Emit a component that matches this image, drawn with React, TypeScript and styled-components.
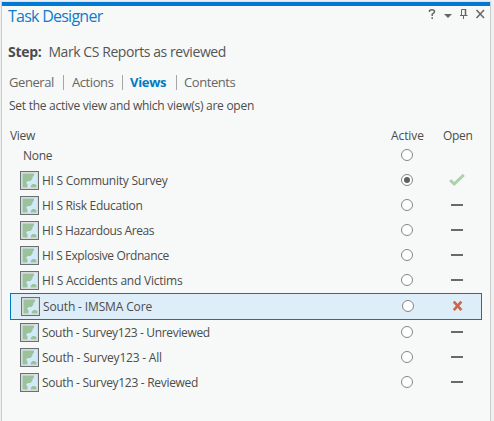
import React from 'react';
import styled, { createGlobalStyle } from 'styled-components';

const GlobalStyle = createGlobalStyle`
  * { box-sizing: border-box; }
  body {
    margin: 0;
    background: #f0f0f0;
    overflow: hidden;
    font-family: "Open Sans", "Noto Sans", sans-serif;
    font-size: 12px;
    color: #4c4c4c;
  }
`;

const Frame = styled.div`
  height: 421px;
  padding: 1px 3px 0 1px;
  background: #f0f0f0;
`;

const Panel = styled.section`
  height: 420px;
  border: 1px solid #cccccc;
  border-bottom: 0;
  border-top-color: #d9e3ea;
  background: #f7f9f8;
`;

const AccentBar = styled.div`
  height: 4px;
  background: #0078d4;
`;

const TitleBar = styled.header`
  height: 30px;
  display: flex;
  justify-content: space-between;
  padding: 0 5px 0 6px;
`;

const Text = styled.span<{ $ls?: number }>`
  white-space: pre;
  letter-spacing: ${(p) => p.$ls ?? 0}px;
`;

const Title = styled.h1`
  margin: 0;
  font-size: 16px;
  line-height: 21px;
  font-weight: 400;
  color: #0f7bcb;
`;

const WindowTools = styled.div`
  display: flex;
  height: 16px;
`;

const StepLine = styled.div`
  height: 32px;
  padding-left: 6px;
  font-size: 14px;
  line-height: 31px;
  display: flex;
  gap: 7px;
`;

const StepName = styled(Text)`
  color: #555;
`;

const StepLabel = styled(Text)`
  font-weight: 700;
`;

const Tabs = styled.nav`
  display: flex;
  align-items: center;
  height: 30px;
  padding: 0 0 1px 7px;
`;

const Tab = styled.div<{ $width: number; $active?: boolean }>`
  width: ${(p) => p.$width}px;
  margin-top: -2px;
  font-size: 13px;
  line-height: 18px;
  font-weight: ${(p) => (p.$active ? 700 : 400)};
  color: ${(p) => (p.$active ? '#007ac2' : '#666')};
`;

const Divider = styled.div<{ $gap: number }>`
  width: 1px;
  height: 15px;
  margin-right: ${(p) => p.$gap}px;
  background: #a6a6a6;
`;

const Hint = styled.div`
  height: 30px;
  padding-left: 7px;
  line-height: 15px;
`;

const ListHeader = styled.div`
  display: grid;
  grid-template-columns: 381px 52px 40px;
  margin-left: 8px;
  height: 15px;
  line-height: 15px;
`;

const Row = styled.div<{ $selected?: boolean }>`
  display: grid;
  grid-template-columns: 391px 46px 18px;
  width: 472px;
  height: ${(p) => (p.$selected ? 27 : 25)}px;
  margin-left: 8px;
  ${(p) =>
    p.$selected
      ? 'border: 1px solid #0079c1; background: #deeef8;'
      : ''}
`;

const NameCell = styled.div<{ $indent: number }>`
  display: flex;
  align-items: center;
  height: 25px;
  gap: 3px;
  padding-left: ${(p) => p.$indent}px;
  line-height: 25px;
`;

const Radio = styled.span`
  width: 12px;
  height: 12px;
  margin-top: 6px;
  border: 1px solid #858585;
  border-radius: 50%;
  background: #fff;
  display: grid;
  place-items: center;
`;

const RadioDot = styled.span`
  width: 6px;
  height: 6px;
  border-radius: 50%;
  background: #5f5f5f;
`;

const OpenCell = styled.div`
  height: 25px;
`;

const Glyph = styled.svg`
  display: block;
  flex: none;
`;

const MapIcon = () => (
  <Glyph width="19" height="19" viewBox="0 0 19 19">
    <rect x="0.5" y="0.5" width="18" height="18" fill="#d9dad9" stroke="#6d6e70" />
    <rect x="2" y="2" width="15" height="15" fill="#d2e9f9" />
    <path d="M2.5 2.5H14V4.5L12.5 6V7.5L10.5 10H8L6 11.5L7.5 13.5V16.5H2.5Z" fill="#9bc29b" />
    <path d="M10.5 16.5L11 14.5L12.5 13H15L16.5 14.5V16.5Z" fill="#9bc29b" />
  </Glyph>
);

type OpenState = 'check' | 'dash' | 'cross';

const OpenMark = ({ state }: { state: OpenState }) => (
  <Glyph width="18" height="25" viewBox="0 0 18 25">
    {state === 'dash' && <rect x="4" y="11" width="12" height="2" fill="#6a6a6c" />}
    {state === 'check' && (
      <path d="M3.2 12.2L7.2 16L16.8 6.8" fill="none" stroke="#add0af" strokeWidth="3" />
    )}
    {state === 'cross' && (
      <path d="M5.8 7.7L13.4 16.2M13.4 7.7L5.8 16.2" fill="none" stroke="#c9684c" strokeWidth="2.7" />
    )}
  </Glyph>
);

interface View {
  name: string;
  ls: number;
  open?: OpenState;
  active?: boolean;
  selected?: boolean;
}

const views: View[] = [
  { name: 'None', ls: -0.3 },
  { name: 'HI S Community Survey', ls: -0.25, open: 'check', active: true },
  { name: 'HI S Risk Education', ls: -0.3, open: 'dash' },
  { name: 'HI S Hazardous Areas', ls: -0.4, open: 'dash' },
  { name: 'HI S Explosive Ordnance', ls: -0.38, open: 'dash' },
  { name: 'HI S Accidents and Victims', ls: -0.22, open: 'dash' },
  { name: 'South - IMSMA Core', ls: -0.14, open: 'cross', selected: true },
  { name: 'South - Survey123 - Unreviewed', ls: -0.34, open: 'dash' },
  { name: 'South - Survey123 - All', ls: -0.22, open: 'dash' },
  { name: 'South - Survey123 - Reviewed', ls: -0.3, open: 'dash' },
];

export default function App() {
  return (
    <>
      <GlobalStyle />
      <Frame>
        <Panel>
          <AccentBar />
          <TitleBar>
            <Title>
              <Text $ls={-0.75}>Task Designer</Text>
            </Title>
            <WindowTools>
              <Glyph width="58" height="16" viewBox="427 6 58 16" fill="none" stroke="#666" strokeWidth="1.5">
                <path d="M429.5 12V11Q429.5 9.7 432 9.7Q434.5 9.7 434.5 11.8Q434.5 13 432.2 14.2V16M432.2 17.2V19" />
                <path d="M444 14H452L448 18Z" fill="#666" stroke="none" />
                <path d="M461.5 15V9.5H465.5V15M460 15.5H467.5M463.5 15V19" strokeWidth="1" />
                <path d="M465.5 9V15" />
                <path d="M476.5 10L484 18M484 10L476.5 18" />
              </Glyph>
            </WindowTools>
          </TitleBar>
          <StepLine>
            <StepLabel $ls={-0.3}>Step:</StepLabel>
            <StepName $ls={-0.43}>Mark CS Reports as reviewed</StepName>
          </StepLine>
          <Tabs>
            <Tab $width={54}><Text $ls={-0.42}>General</Text></Tab>
            <Divider $gap={8} />
            <Tab $width={50}><Text $ls={-0.42}>Actions</Text></Tab>
            <Divider $gap={7} />
            <Tab $width={46} $active><Text $ls={-0.3}>Views</Text></Tab>
            <Divider $gap={7} />
            <Tab $width={60}><Text $ls={-0.42}>Contents</Text></Tab>
          </Tabs>
          <Hint>
            <Text $ls={-0.27}>Set the active view and which view(s) are open</Text>
          </Hint>
          <ListHeader>
            <Text $ls={-0.3}>View</Text>
            <Text $ls={-0.1}>Active</Text>
            <Text $ls={-0.3}>Open</Text>
          </ListHeader>
          {views.map((view) => (
            <Row key={view.name} $selected={view.selected}>
              <NameCell $indent={view.open ? 10 : 13}>
                {view.open && <MapIcon />}
                <Text $ls={view.ls}>{view.name}</Text>
              </NameCell>
              <Radio>{view.active && <RadioDot />}</Radio>
              <OpenCell>{view.open && <OpenMark state={view.open} />}</OpenCell>
            </Row>
          ))}
        </Panel>
      </Frame>
    </>
  );
}
